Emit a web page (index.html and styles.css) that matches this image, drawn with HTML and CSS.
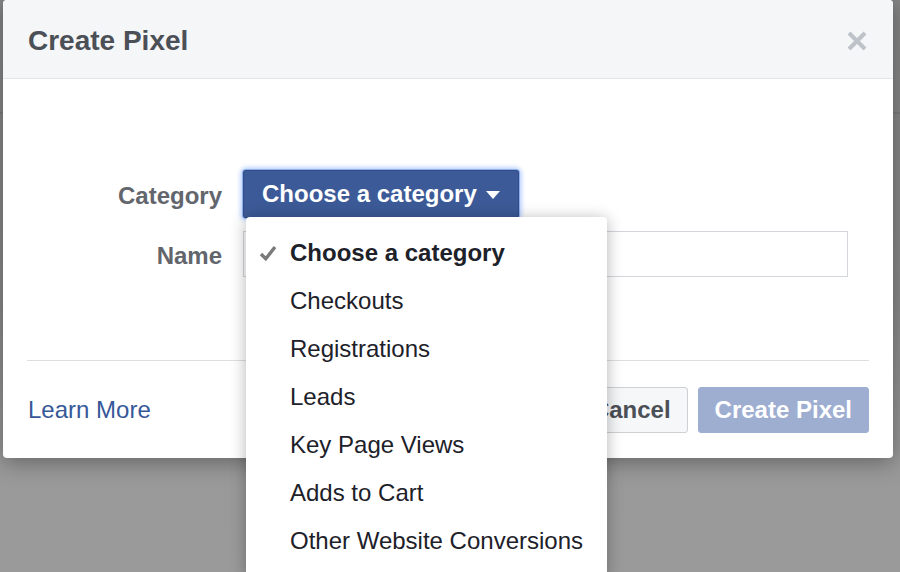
FILE: index.html
```html
<!DOCTYPE html>
<html lang="en">
<head>
<meta charset="utf-8">
<title>Create Pixel</title>
<link rel="stylesheet" href="styles.css">
</head>
<body>
<div class="dialog">
  <div class="dialog-header">
    <h1 class="dialog-title">Create Pixel</h1>
    <button class="close-btn" aria-label="Close">
      <svg width="20" height="20" viewBox="0 0 20 20"><path d="M2 2 L18 18 M18 2 L2 18" stroke="#bec3c9" stroke-width="4" stroke-linecap="butt" fill="none"/></svg>
    </button>
  </div>
  <div class="dialog-body">
    <div class="form-grid">
      <label class="form-label">Category</label>
      <div class="select-wrap">
        <button class="select-btn">Choose a category
          <svg class="caret" width="14" height="8" viewBox="0 0 14 8"><path d="M0 0 H14 L7 8 Z" fill="#fff"/></svg>
        </button>
        <ul class="menu">
          <li class="menu-item selected">
            <svg class="check" width="18" height="18" viewBox="0 0 18 18"><path d="M2 10 L6.8 14.8 L16 3" stroke="#7a7a7a" stroke-width="3.4" fill="none"/></svg>
            Choose a category</li>
          <li class="menu-item">Checkouts</li>
          <li class="menu-item">Registrations</li>
          <li class="menu-item">Leads</li>
          <li class="menu-item">Key Page Views</li>
          <li class="menu-item">Adds to Cart</li>
          <li class="menu-item">Other Website Conversions</li>
        </ul>
      </div>
      <label class="form-label">Name</label>
      <input class="text-input" type="text">
    </div>
  </div>
  <div class="dialog-footer">
    <a class="learn-more" href="#">Learn More</a>
    <div class="actions">
      <button class="btn btn-cancel">Cancel</button>
      <button class="btn btn-primary">Create Pixel</button>
    </div>
  </div>
</div>
</body>
</html>
```
FILE: styles.css
```css
html, body {
  margin: 0;
  height: 572px;
  overflow: hidden;
}
body {
  padding: 0 7px 0 3px;
  font-family: "Liberation Sans", Arial, sans-serif;
  background:
    linear-gradient(to bottom, transparent 0 112px, rgba(0,0,0,0.08) 112px 114px, transparent 114px),
    linear-gradient(to bottom, #858585 0, #8a8a8a 300px, #999 460px, #9a9a9a 572px);
}
.dialog {
  background: #fff;
  border-radius: 4px;
  box-shadow: 0 4px 22px rgba(0,0,0,0.35);
  height: 458px;
  display: flex;
  flex-direction: column;
}
.dialog-header {
  height: 78px;
  background: #f5f6f7;
  border-bottom: 1px solid #e5e5e5;
  border-radius: 4px 4px 0 0;
  display: flex;
  align-items: center;
  justify-content: space-between;
  padding: 0 26px 0 25px;
}
.dialog-title {
  margin: 0;
  font-size: 28px;
  font-weight: bold;
  color: #4b4f56;
  padding-top: 3px;
}
.close-btn {
  background: none;
  border: 0;
  padding: 0;
  width: 20px;
  height: 20px;
  margin-top: 3px;
  display: flex;
}
.dialog-body {
  padding-top: 91px;
  height: 190px;
  margin: 0 24px 0 24px;
  border-bottom: 1px solid #dddfe2;
}
.form-grid {
  display: grid;
  grid-template-columns: 219px 605px;
  column-gap: 21px;
  row-gap: 13px;
  margin-left: -24px;
  align-items: center;
}
.form-label {
  text-align: right;
  font-size: 24px;
  font-weight: bold;
  color: #62666c;
  padding-top: 3px;
}
.select-wrap {
  position: relative;
  justify-self: start;
}
.select-btn {
  display: flex;
  align-items: center;
  gap: 9px;
  height: 48px;
  padding: 0 18px 0 18px;
  background: #3c5a97;
  border: 1px solid #324d84;
  border-bottom-color: #29487d;
  border-radius: 3px;
  color: #fff;
  font-family: inherit;
  font-size: 24px;
  font-weight: bold;
  box-shadow: 0 0 0 1px #8fb1f2, 0 0 5px 2px rgba(110,160,255,0.6);
}
.caret {
  margin-top: 1px;
}
.text-input {
  box-sizing: border-box;
  height: 46px;
  width: 605px;
  border: 1px solid #d3d6db;
  border-radius: 0;
  background: #fff;
  margin: 0;
}
.menu {
  position: absolute;
  left: 3px;
  top: 47px;
  width: 361px;
  margin: 0;
  padding: 12px 0;
  list-style: none;
  background: #fff;
  border-radius: 4px;
  box-shadow: 0 2px 16px rgba(0,0,0,0.3);
  z-index: 10;
}
.menu-item {
  position: relative;
  height: 48px;
  line-height: 48px;
  padding-left: 44px;
  font-size: 24px;
  color: #1d2129;
  white-space: nowrap;
}
.menu-item.selected {
  font-weight: bold;
}
.check {
  position: absolute;
  left: 13px;
  top: 15px;
}
.dialog-footer {
  display: flex;
  align-items: center;
  justify-content: space-between;
  padding: 26px 24px 25px 24px;
}
.learn-more {
  font-size: 24px;
  color: #365899;
  text-decoration: none;
  padding-left: 1px;
}
.actions {
  display: flex;
  gap: 10px;
}
.btn {
  height: 46px;
  padding: 0 16px;
  border-radius: 3px;
  font-family: inherit;
  font-size: 24px;
  font-weight: bold;
}
.btn-cancel {
  background: #f6f7f9;
  border: 1px solid #ced0d4;
  color: #4b4f56;
}
.btn-primary {
  background: #9eaed1;
  border: 1px solid #9eaed1;
  color: #fff;
}
```
